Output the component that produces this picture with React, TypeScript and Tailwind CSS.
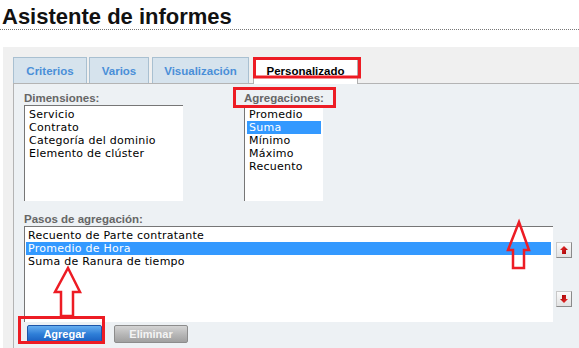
import React from "react";

const sans = { fontFamily: '"Liberation Sans", Arial, sans-serif' };
const verd = { fontFamily: '"DejaVu Sans", Verdana, sans-serif' };

function Tab({ label, w, ml, active }: { label: string; w: string; ml: string; active?: boolean }) {
  if (active) {
    return (
      <div
        className={`${w} ${ml} relative z-10 -mb-px h-[27px] border-l border-r border-t border-[#b0b0b0] bg-white pt-[3px] text-center text-[11.5px] font-bold leading-[21px] text-black`}
        style={sans}
      >
        {label}
      </div>
    );
  }
  return (
    <div
      className={`${w} ${ml} h-[26px] border-l border-r border-t border-[#a9c0d1] bg-[#d6e3ed] pt-[3px] text-center text-[11.5px] font-bold leading-[21px] text-[#4a8fd8]`}
      style={sans}
    >
      {label}
    </div>
  );
}

function Item({ text, sel }: { text: string; sel?: boolean }) {
  return (
    <div
      className={`h-[13px] whitespace-nowrap pl-[2px] pt-[1px] text-[11px] leading-[12px] tracking-[0.25px] ${sel ? "bg-[#3399ff] text-white" : "text-black"}`}
      style={verd}
    >
      {text}
    </div>
  );
}

function Arrow({ down }: { down?: boolean }) {
  return (
    <svg width="8" height="8" viewBox="0 0 8 8" className={down ? "rotate-180" : ""}>
      <defs>
        <linearGradient id={down ? "ga2" : "ga1"} x1="0" y1="0" x2="1" y2="1">
          <stop offset="0" stopColor="#f03030" />
          <stop offset="1" stopColor="#a00000" />
        </linearGradient>
      </defs>
      <polygon points="4,0 8,4 6,4 6,8 2,8 2,4 0,4" fill={`url(#${down ? "ga2" : "ga1"})`} />
    </svg>
  );
}

function SmallBtn({ down }: { down?: boolean }) {
  return (
    <div className="flex h-[16px] w-[16px] items-center justify-center border border-[#c8c8c8] border-b-[#8a8a8a] border-r-[#8a8a8a] bg-gradient-to-b from-[#fafafa] to-[#e2e2e2]">
      <Arrow down={down} />
    </div>
  );
}

export default function App() {
  return (
    <div className="relative h-[348px] w-[579px] overflow-hidden bg-white">
      <h1
        className="h-[30px] border-b border-dotted border-[#777] pl-[2px] pt-[4px] text-[22px] font-bold leading-[25px] text-[#111]"
        style={sans}
      >
        Asistente de informes
      </h1>
      <div className="ml-[3px] mt-[17px] h-[301px] bg-[#f0f0f0] pl-[10px] pt-[10px]">
        <div className="flex h-[26px] items-start">
          <Tab label="Criterios" w="w-[74px]" ml="ml-0" />
          <Tab label="Varios" w="w-[60px]" ml="ml-[2px]" />
          <Tab label="Visualización" w="w-[97px]" ml="ml-[3px]" />
          <Tab label="Personalizado" w="w-[105px]" ml="ml-[4px]" active />
        </div>
        <div className="h-[265px] border-l border-t border-[#b4b4b4] bg-[#edf1f4] pl-[10px] pt-[8px]">
          <div className="flex">
            <div className="w-[159px]">
              <div className="h-[13px] text-[11.5px] font-bold leading-[13px] text-[#666]" style={sans}>
                Dimensiones:
              </div>
              <div className="h-[96px] border-l border-t border-[#767676] bg-white p-[2px]">
                <Item text="Servicio" />
                <Item text="Contrato" />
                <Item text="Categoría del dominio" />
                <Item text="Elemento de clúster" />
              </div>
            </div>
            <div className="ml-[61px] w-[79px]">
              <div className="h-[13px] text-[11.5px] font-bold leading-[13px] text-[#666]" style={sans}>
                Agregaciones:
              </div>
              <div className="h-[96px] border-l border-t border-[#767676] bg-white p-[2px]">
                <Item text="Promedio" />
                <Item text="Suma" sel />
                <Item text="Mínimo" />
                <Item text="Máximo" />
                <Item text="Recuento" />
              </div>
            </div>
          </div>
          <div className="mt-[12px] h-[13px] text-[11.5px] font-bold leading-[13px] text-[#666]" style={sans}>
            Pasos de agregación:
          </div>
          <div className="flex">
            <div className="h-[96px] w-[529px] border-l border-t border-[#767676] bg-white pl-[1px] pr-[2px] pt-[2px]">
              <Item text="Recuento de Parte contratante" />
              <Item text="Promedio de Hora" sel />
              <Item text="Suma de Ranura de tiempo" />
            </div>
            <div className="ml-[3px] flex h-[96px] flex-col justify-between pb-[15px] pt-[16px]">
              <SmallBtn />
              <SmallBtn down />
            </div>
          </div>
          <div className="ml-[3px] mt-[3px] flex">
            <div
              className="flex h-[18px] w-[75px] items-center justify-center rounded-[2px] border border-[#1d55a8] bg-gradient-to-b from-[#66aef0] via-[#2f7fd8] to-[#1a5fc0] text-[11px] font-bold text-white"
              style={sans}
            >
              Agregar
            </div>
            <div
              className="ml-[12px] flex h-[18px] w-[74px] items-center justify-center rounded-[2px] border border-[#8c8c8c] bg-gradient-to-b from-[#d4d4d4] via-[#b8b8b8] to-[#a0a0a0] text-[11px] font-bold text-[#f4f4f4]"
              style={sans}
            >
              Eliminar
            </div>
          </div>
        </div>
      </div>
      <svg className="pointer-events-none absolute left-0 top-0 z-20" width="579" height="348" viewBox="0 0 579 348">
        <g fill="none" stroke="#ed1c24" strokeWidth="3">
          <rect x="254.5" y="58.5" width="105" height="18.5" />
          <rect x="234.5" y="88.5" width="100" height="18" />
          <rect x="19.5" y="317.5" width="84" height="25" />
        </g>
        <g fill="none" stroke="#ed1c24" strokeWidth="2.5" strokeLinejoin="miter">
          <polygon points="68,268 80,292 73,292 73,316 61,316 61,292 55,292" />
          <polygon points="519,222 529,250 524,250 524,268 513,268 513,250 508,250" />
        </g>
      </svg>
    </div>
  );
}
